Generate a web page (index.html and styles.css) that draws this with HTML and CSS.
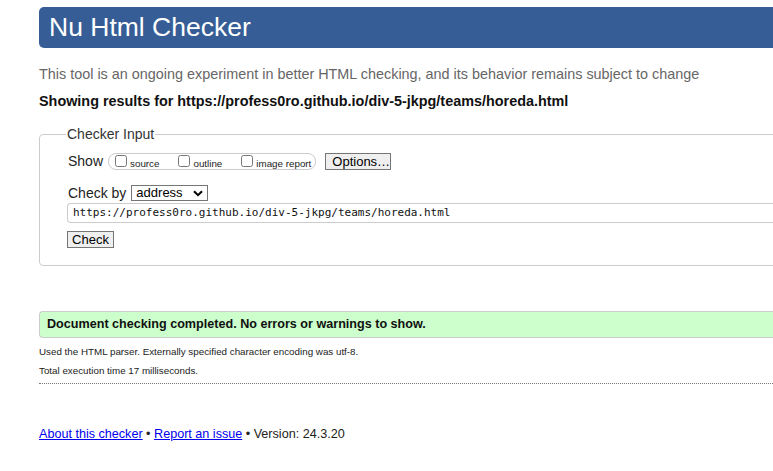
FILE: index.html
```html
<!DOCTYPE html>
<html>
<head>
<meta charset="utf-8">
<title>Showing results for https://profess0ro.github.io/div-5-jkpg/teams/horeda.html - Nu Html Checker</title>
<link rel="stylesheet" href="styles.css">
</head>
<body>
<div class="page">
  <h1 class="title">Nu Html Checker</h1>
  <p class="intro">This tool is an ongoing experiment in better HTML checking, and its behavior remains subject to change</p>
  <p class="showing">Showing results for https://profess0ro.github.io/div-5-jkpg/teams/horeda.html</p>
  <form class="form">
    <fieldset class="input-box">
      <legend class="legend">Checker Input</legend>
      <div class="row show-row">
        <span class="label">Show</span>
        <fieldset class="opts">
          <label class="opt"><input type="checkbox" class="cb"><span>source</span></label>
          <label class="opt"><input type="checkbox" class="cb"><span>outline</span></label>
          <label class="opt"><input type="checkbox" class="cb"><span>image report</span></label>
        </fieldset>
        <button type="button" class="btn options">Options…</button>
      </div>
      <div class="row checkby-row">
        <span class="label">Check by</span>
        <span class="select">address<svg width="10" height="7" viewBox="0 0 10 7"><path d="M1 1.2 L5 5.2 L9 1.2" fill="none" stroke="#000" stroke-width="2"/></svg></span>
      </div>
      <div class="url">https://profess0ro.github.io/div-5-jkpg/teams/horeda.html</div>
      <div class="row">
        <button type="button" class="btn check">Check</button>
      </div>
    </fieldset>
  </form>
  <p class="success">Document checking completed. No errors or warnings to show.</p>
  <p class="details">Used the HTML parser. Externally specified character encoding was utf-8.</p>
  <p class="details">Total execution time 17 milliseconds.</p>
  <hr class="dotted">
  <p class="footer"><a href="#">About this checker</a> • <a href="#">Report an issue</a> • Version: 24.3.20</p>
</div>
</body>
</html>
```
FILE: styles.css
```css
html, body {
  margin: 0;
  padding: 0;
  overflow: hidden;
  background: #fff;
}
body {
  font-family: "Liberation Sans", Arial, sans-serif;
  color: #111;
}
.page {
  width: 1000px;
  padding: 7px 0 0 39px;
}
.title {
  margin: 0;
  background: #365d95;
  color: #fff;
  font-weight: normal;
  font-size: 26.5px;
  line-height: 41px;
  height: 41px;
  padding-left: 10px;
  border-radius: 5px 0 0 5px;
}
.intro {
  margin: 17px 0 0;
  font-size: 14.4px;
  line-height: 18px;
  color: #666;
}
.showing {
  margin: 9px 0 0;
  font-size: 14.4px;
  line-height: 18px;
  font-weight: bold;
  color: #111;
}
.form {
  margin: 16px 0 0;
}
.input-box {
  margin: 0;
  border: 1px solid #ccc;
  border-radius: 4px;
  padding: 8px 0 17px 28px;
  box-sizing: border-box;
  height: 140px;
}
.legend {
  font-size: 14px;
  color: #333;
  padding: 0 1px;
  margin-left: -2px;
}
.row {
  display: flex;
  align-items: center;
}
.label {
  font-size: 14px;
  color: #222;
}
.show-row {
  height: 22px;
}
.opts {
  display: flex;
  align-items: center;
  margin: 0 0 0 5px;
  padding: 0 4px 0 6px;
  border: 1px solid #ccc;
  border-radius: 8px;
  height: 17px;
  box-sizing: border-box;
  width: 207px;
  white-space: nowrap;
}
.opt {
  display: flex;
  align-items: flex-end;
  font-size: 9.8px;
  line-height: 11px;
  color: #222;
  margin-right: 19px;
  white-space: nowrap;
}
.opt:last-child {
  margin-right: 0;
}
.opt span {
  position: relative;
  top: 2px;
}
.cb {
  margin: 0 3px 0 0;
  width: 12px;
  height: 12px;
}
.btn {
  font-family: "Liberation Sans", Arial, sans-serif;
  font-size: 13px;
  color: #000;
  background: #efefef;
  border: 1px solid #767676;
  border-radius: 0;
  padding: 0 6px;
  height: 17px;
  line-height: 15px;
}
.options {
  margin-left: 9px;
  width: 66px;
}
.checkby-row {
  margin-top: 13px;
}
.select {
  display: inline-flex;
  align-items: center;
  justify-content: space-between;
  box-sizing: border-box;
  width: 77px;
  height: 16px;
  margin-left: 5px;
  border: 1px solid #767676;
  padding: 0 4px 0 4px;
  font-size: 13px;
  line-height: 14px;
  color: #000;
}
.url {
  margin-top: 2px;
  margin-left: -1px;
  height: 20px;
  box-sizing: border-box;
  border: 1px solid #ccc;
  border-right: none;
  border-radius: 4px 0 0 4px;
  padding-left: 5px;
  font-family: "DejaVu Sans Mono", monospace;
  font-size: 11px;
  line-height: 18px;
  color: #111;
}
.check {
  margin-top: 8px;
  margin-left: -1px;
  width: 47px;
  padding: 0;
}
.success {
  margin: 45px 0 0;
  background: #ccffcc;
  border: 1px solid #ccc;
  border-right: none;
  border-radius: 4px 0 0 4px;
  padding: 0 0 0 7px;
  font-size: 12.6px;
  font-weight: bold;
  line-height: 25px;
  color: #111;
}
.details {
  margin: 8px 0 0;
  font-size: 9.8px;
  line-height: 12px;
  color: #222;
}
.details + .details {
  margin-top: 7px;
}
.dotted {
  margin: 6px 0 0;
  border: none;
  border-top: 1px dotted #777;
  height: 0;
}
.footer {
  margin: 41px 0 0;
  font-size: 12.6px;
  line-height: 18px;
  color: #222;
}
.footer a {
  color: #00e;
}
```
